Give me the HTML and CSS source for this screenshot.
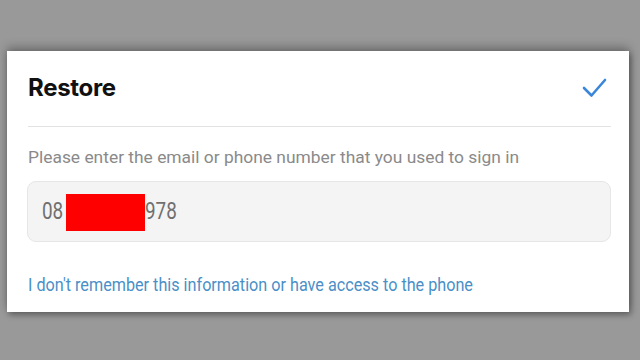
FILE: index.html
```html
<!DOCTYPE html>
<html>
<head>
<meta charset="utf-8">
<link rel="stylesheet" href="styles.css">
</head>
<body>
<div class="card">
  <div class="header">
    <h1 class="title">Restore</h1>
    <svg class="check" width="26" height="22" viewBox="0 0 26 22"><path d="M2 11 L9.5 18.5 L23 3" fill="none" stroke="#3a87d9" stroke-width="2.6" stroke-linecap="round" stroke-linejoin="round"/></svg>
  </div>
  <div class="divider"></div>
  <p class="hint">Please enter the email or phone number that you used to sign in</p>
  <div class="field"><span class="num n1">08</span><span class="redact"></span><span class="num n2">978</span></div>
  <a class="link">I don't remember this information or have access to the phone</a>
</div>
</body>
</html>
```
FILE: styles.css
```css
html, body { margin: 0; padding: 0; }
body {
  background: #999999;
  width: 640px;
  height: 360px;
  overflow: hidden;
  padding: 51px 11px 0 7px;
  box-sizing: border-box;
  font-family: Roboto, "Liberation Sans", sans-serif;
}
.card {
  background: #ffffff;
  height: 261px;
  box-shadow: 0 -4px 9px rgba(0,0,0,0.28), 2px 3px 6px rgba(0,0,0,0.35);
  padding: 0 18px 0 20px;
  box-sizing: border-box;
  display: flex;
  flex-direction: column;
}
.header {
  display: flex;
  justify-content: space-between;
  align-items: center;
  height: 72px;
  padding-left: 1px;
  padding-right: 3px;
}
.title {
  margin: 0;
  font-family: Inter, "Noto Sans", sans-serif;
  font-weight: 700;
  font-size: 24px;
  letter-spacing: -0.3px;
  color: #111;
}
.check { display: block; margin-top: 2px; }
.divider {
  height: 1px;
  background: #e2e2e2;
  margin: 3px 0 0 1px;
}
.hint {
  margin: 18px 0 0 1px;
  font-size: 17.4px;
  color: #8a8a8a;
  line-height: 24px;
  white-space: nowrap;
}
.field {
  margin-top: 12px;
  height: 61px;
  background: #f4f4f4;
  border: 1px solid #e6e6e6;
  border-radius: 9px;
  display: flex;
  align-items: center;
  padding-left: 14px;
  box-sizing: border-box;
}
.num {
  display: inline-block;
  font-size: 23px;
  color: #707070;
  transform: scaleX(0.82);
  transform-origin: left center;
}
.n1 { margin-right: -4.6px; }
.n2 { margin-right: -7px; }
.redact {
  display: inline-block;
  width: 79px;
  height: 37px;
  background: #ff0000;
  margin: 1px 0 0 3px;
}
.link {
  display: block;
  margin: 31px 0 0 1px;
  font-size: 17.5px;
  color: #4a8fc7;
  line-height: 24px;
  white-space: nowrap;
  transform: scaleX(0.925);
  transform-origin: left center;
}
```
